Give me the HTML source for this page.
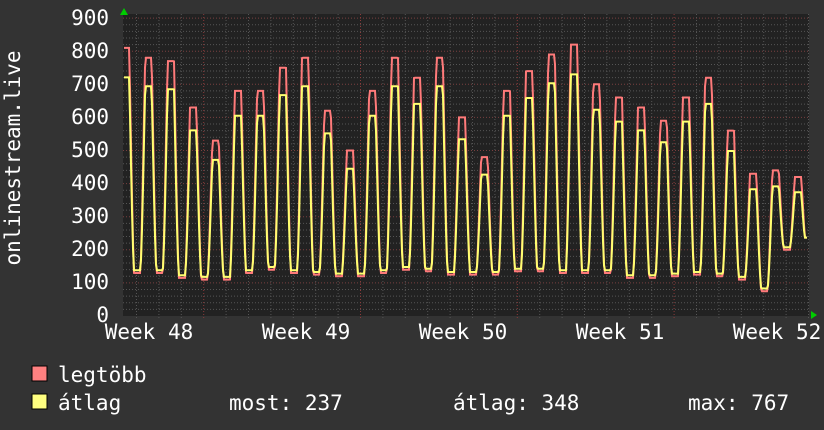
<!DOCTYPE html>
<html><head><meta charset="utf-8"><style>
html,body{margin:0;padding:0;background:#333;}
body{width:824px;height:430px;overflow:hidden;position:relative;font-family:"DejaVu Sans Mono","Liberation Mono",monospace;color:#fff;}
svg{position:absolute;left:0;top:0}
text{font-family:"DejaVu Sans Mono","Liberation Mono",monospace;fill:#fff;font-size:21px}
</style></head><body>
<svg width="824" height="430" viewBox="0 0 824 430" xmlns="http://www.w3.org/2000/svg">
<rect x="0" y="0" width="824" height="430" fill="#333"/>
<rect x="123" y="14" width="686" height="302" fill="#222"/>
<g id="grid"></g>
<g id="lines"></g>
<polygon points="120,15 128,15 124,8" fill="#0c0"/>
<polygon points="811,311 811,319 817,315" fill="#0c0"/>
<g text-anchor="end">
<text x="109" y="25">900</text><text x="109" y="58">800</text><text x="109" y="91">700</text>
<text x="109" y="124">600</text><text x="109" y="157">500</text><text x="109" y="190">400</text>
<text x="109" y="223">300</text><text x="109" y="256">200</text><text x="109" y="289">100</text>
<text x="109" y="322">0</text>
</g>
<g text-anchor="middle">
<text x="149" y="339">Week 48</text><text x="306" y="339">Week 49</text><text x="463" y="339">Week 50</text>
<text x="620" y="339">Week 51</text><text x="777" y="339">Week 52</text>
</g>
<text transform="translate(20,158) rotate(-90)" text-anchor="middle">onlinestream.live</text>
<rect x="32" y="366" width="15" height="15" fill="#ff8080" stroke="#000"/>
<rect x="32" y="394" width="15" height="15" fill="#ffff80" stroke="#000"/>
<text x="58" y="382">legtöbb</text>
<text x="58" y="410">átlag</text>
<text x="229" y="410">most: 237</text>
<text x="453" y="410">átlag: 348</text>
<text x="688" y="410">max: 767</text>
</svg>
<script>
var NS="http://www.w3.org/2000/svg";
var g=document.getElementById('grid'),L=document.getElementById('lines');
function ln(x1,y1,x2,y2,c){var e=document.createElementNS(NS,'line');e.setAttribute('x1',x1);e.setAttribute('y1',y1);e.setAttribute('x2',x2);e.setAttribute('y2',y2);e.setAttribute('stroke',c);e.setAttribute('stroke-width',1);e.setAttribute('stroke-dasharray','1,2');g.appendChild(e);}
function Y(v){return 316-v*0.331;}
for(var v=0;v<=900;v+=20){if(v%100==0)continue;ln(123,Y(v),809,Y(v),'#555');}
for(var v=100;v<=900;v+=100){ln(123,Y(v),809,Y(v),'#7a4040');}
for(var i=-5;i<40;i++){var x=136.5+i*22.4;if(x<124||x>809)continue;var red=((i+4)%7==0);ln(x,14,x,320,red?'#8a3a3a':'#555');}
var mx=[810,780,770,630,530,680,680,750,780,620,500,680,780,720,780,600,480,680,740,790,820,700,660,630,590,660,720,560,430,440,420];
var mn=[130,130,115,110,110,130,140,130,125,120,120,130,140,135,125,125,125,135,135,130,130,130,115,115,120,125,120,110,75,200,200];
var pm=[],pa=[];
for(var x=124;x<=807;x+=1){
 var p=(x-126)/22.4;var k=Math.round(p);var d=Math.abs(p-k);
 if(k<0)k=0;if(k>mx.length-1)k=mx.length-1;
 var M=mx[k];
 var m=(p>=k)?mn[k]:mn[Math.max(k-1,0)];
 var c=Math.cos(2*Math.PI*d);
 var s=Math.max(0,Math.min(1,0.5+c*0.8));
 s=Math.pow(s,1.2);
 var vm=m+(M-m)*s;
 var va=m+8+((M*0.89)-m-8)*Math.pow(s,1.1);
 if(x>=805){vm=237;va=237;}
 pm.push(x+','+Y(vm).toFixed(1));pa.push(x+','+Y(va).toFixed(1));
}
function pl(p,c){var e=document.createElementNS(NS,'polyline');e.setAttribute('points',p.join(' '));e.setAttribute('fill','none');e.setAttribute('stroke',c);e.setAttribute('stroke-width',2);L.appendChild(e);}
pl(pm,'#ff7a7a');pl(pa,'#ffff70');
</script>
</body></html>
